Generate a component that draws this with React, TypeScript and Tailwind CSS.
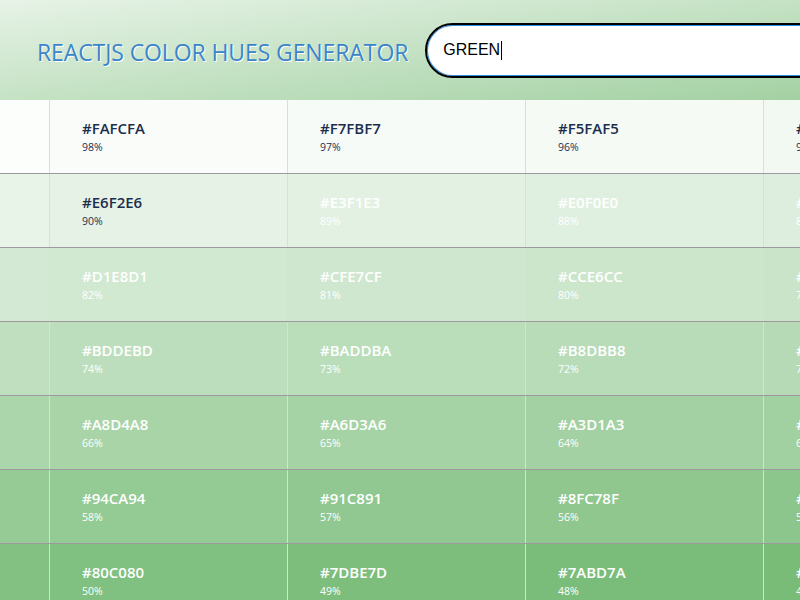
import React from "react"

const BASE = { r: 0, g: 128, b: 0 }
const PER_ROW = 8

function toHex(n: number) {
  return Math.round(n).toString(16).padStart(2, "0").toUpperCase()
}

function tint(p: number) {
  const f = p / 100
  const r = BASE.r + (255 - BASE.r) * f
  const g = BASE.g + (255 - BASE.g) * f
  const b = BASE.b + (255 - BASE.b) * f
  return `#${toHex(r)}${toHex(g)}${toHex(b)}`
}

function HueCell({ percent }: { percent: number }) {
  const hex = tint(percent)
  const dark = percent >= 90
  return (
    <div
      className="w-[238px] shrink-0 border-r border-[#dcdcdc] pl-[32px] pt-[18px]"
      style={{ backgroundColor: hex }}
    >
      <div
        className={`text-[15px] leading-[20px] font-semibold ${dark ? "text-[#1c2e4d]" : "text-white"}`}
      >
        {hex}
      </div>
      <div
        className={`mt-[2px] text-[10.5px] leading-[14px] ${dark ? "text-[#1c2e4d]" : "text-white"}`}
      >
        {percent}%
      </div>
    </div>
  )
}

export default function App() {
  const percents = Array.from({ length: 56 }, (_, i) => 99 - i)
  const rows: number[][] = []
  for (let i = 0; i < percents.length; i += PER_ROW) {
    rows.push(percents.slice(i, i + PER_ROW))
  }

  return (
    <div className="h-[600px] w-[800px] overflow-hidden bg-white font-['Open_Sans',sans-serif]">
      <header className="flex h-[100px] items-center gap-[17px] bg-linear-to-br from-[#e7f3e7] to-[#a3d1a3] pl-[37px]">
        <h1 className="shrink-0 pt-[4px] font-['Open_Sans',sans-serif] text-[23px] font-normal tracking-[-0.1px] text-[#3a85c9] [text-shadow:1px_1px_0_#ffffff]">
          REACTJS COLOR HUES GENERATOR
        </h1>
        <div className="flex h-[55px] w-[460px] shrink-0 items-center rounded-l-full border-2 border-black bg-white pl-[16px] shadow-[inset_0_0_0_1px_#2a8fe0]">
          <span className="font-['Liberation_Sans',Arial,sans-serif] text-[16px] text-black">GREEN</span>
          <span className="ml-[1px] h-[19px] w-[1px] bg-black" />
        </div>
      </header>
      <main className="-ml-[188px]">
        {rows.map((row, i) => (
          <div key={i} className="flex h-[74px] border-b border-[#9e99a0]">
            {row.map((p) => (
              <HueCell key={p} percent={p} />
            ))}
          </div>
        ))}
      </main>
    </div>
  )
}
